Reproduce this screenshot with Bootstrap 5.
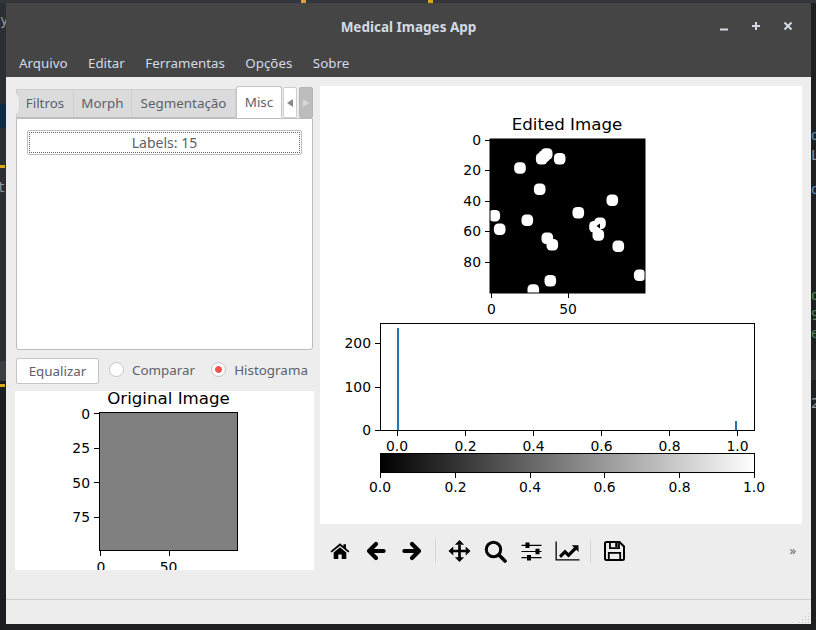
<!DOCTYPE html>
<html lang="pt-BR">
<head>
    <title>Medical Images App</title>
    <meta charset="utf-8">
    <meta name="viewport" content="width=device-width, initial-scale=1">
    <link href="https://cdn.jsdelivr.net/npm/bootstrap@5.3.0/dist/css/bootstrap.min.css" rel="stylesheet">
    <style>
        body {
            font-family: "Noto Sans", sans-serif;
            font-size: 13.4px;
            background-color: #1e1f21;
            color: #5c616c;
            height: 630px;
            overflow: hidden;
            position: relative;
        }
        /* editor that shows behind the window */
        .desk-bit {
            position: absolute;
            font-family: "DejaVu Sans Mono", monospace;
            font-size: 14px;
            line-height: 16px;
        }
        .desk-left { left: 0; top: 0; width: 6px; height: 630px; background-color: #2b2e32; }
        .desk-top { left: 0; top: 0; width: 816px; height: 3px; background-color: #33363a; }
        .desk-blue { left: 0; top: 104px; width: 6px; height: 24px; background-color: #0e2a45; }
        .desk-band-l { left: 0; top: 361px; width: 6px; height: 20px; background-color: #3c3f42; }
        .desk-dark-l { left: 0; top: 381px; width: 6px; height: 249px; background-color: #1d1e21; }
        .desk-band-r { left: 811px; top: 360px; width: 5px; height: 20px; background-color: #2d2e31; }
        .desk-dot { width: 5px; height: 3px; background-color: #d9a520; }

        .app-window {
            position: absolute;
            left: 6px;
            top: 3px;
            width: 805px;
            height: 621px;
            background-color: #ededed;
        }
        .title-row { height: 46px; padding-top: 2px; background-color: #454545; color: #d3dae3; }
        .title-text { font-weight: 700; font-size: 13.5px; }
        .win-btns { right: 14px; top: 14px; }
        .menu-row { height: 28px; background-color: #454545; padding: 0 2.75px; }
        .menu-row .nav-link { color: #d3dae3; padding: 0 10.25px; font-size: 13.33px; line-height: 28px; }

        .work-area { height: 522px; padding: 9px 9px 0 9px; gap: 6px; }
        .left-col { width: 299px; }
        .right-col { width: 482px; }

        .tab-row { height: 32px; padding: 0 1px; border: 0; flex-wrap: nowrap; }
        .tab-row .nav-link {
            height: 29px;
            margin: 3px 0 0 0;
            padding: 0;
            text-align: center;
            line-height: 27px;
            color: #5c616c;
            background-color: #dbdbdb;
            border: 1px solid #cfcfcf;
            border-left-width: 0;
            border-bottom-color: #bdbdbd;
            border-radius: 0;
        }
        .tab-row .first-tab { position: relative; width: 58px; border-left-width: 1px; }
        .tab-row .morph-tab { width: 58px; }
        .tab-row .segment-tab { width: 104px; }
        .first-tab::before {
            content: "";
            position: absolute;
            left: -1px;
            top: 4px;
            width: 3px;
            height: 20px;
            background-color: #ededed;
            border-radius: 0 3px 3px 0 / 0 10px 10px 0;
        }
        .tab-row .nav-link.active {
            width: 46px;
            height: 32px;
            margin-top: 0;
            line-height: 30px;
            background-color: #fff;
            border: 1px solid #c4c4c4;
            border-bottom-color: #fff;
            border-radius: 3px 3px 0 0;
            position: relative;
            z-index: 1;
        }
        .tab-arrow {
            width: 14px;
            height: 31px;
            margin: 1px 0 0 1px;
            border: 1px solid #cfcfcf;
            border-radius: 2px;
            background-color: #fff;
        }
        .tab-arrow-off { margin-left: 2px; background-color: #bdbdbd; border-color: #b5b5b5; }
        .tab-panel {
            height: 232px;
            margin: 0 1px;
            padding: 11px 10px;
            background-color: #fff;
            border: 1px solid #bdbdbd;
            border-radius: 0 0 3px 3px;
        }
        .btn.labels-btn {
            --bs-btn-padding-y: 0;
            height: 25px;
            line-height: 21px;
            font-size: 14px;
            color: #5c616c;
            background-color: #fff;
            border: 1px solid #bdbdbd;
            border-radius: 2px;
            outline: 1px dotted #666;
            outline-offset: -3px;
        }
        .control-row { height: 26px; margin: 8px 0 7px 0; padding-left: 1px; }
        .btn.equal-btn {
            width: 83px;
            height: 26px;
            padding: 0;
            line-height: 25px;
            font-size: 13.4px;
            color: #5c616c;
            background-color: #fff;
            border: 1px solid #c4c4c4;
            border-radius: 2px;
        }
        .radio-item { margin: 0 0 2px 0; padding: 0; min-height: 0; gap: 8px; }
        .radio-first { margin-left: 10px; }
        .radio-second { margin-left: 16px; }
        .radio-item .form-check-input {
            float: none;
            margin: 0;
            width: 15px;
            height: 15px;
            border: 1px solid #c4c4c4;
        }
        .radio-item .form-check-input:checked {
            background-image: none;
            background: radial-gradient(circle, #f0544c 0 3px, #fff 3.8px);
            border-color: #c4c4c4;
        }
        .radio-item .form-check-label { color: #5c616c; }
        .plot-panel { height: 179px; background-color: #fff; }
        .plot-panel svg, .canvas-panel svg { display: block; }
        .plot-label { font-family: "DejaVu Sans", sans-serif; font-size: 13.9px; fill: #000; }
        .plot-title { font-family: "DejaVu Sans", sans-serif; font-size: 16.67px; fill: #000; text-anchor: middle; }
        .canvas-panel { height: 438px; background-color: #fff; }
        .tool-row { height: 75px; padding: 14px 4px 0 2px; }
        .tool-btn { width: 36px; height: 26px; color: #000; }
        .tool-sep { width: 1px; height: 24px; background-color: #d6d6d6; margin: 1px 5px 0 5px; }
        .more-arrows { font-size: 13px; line-height: 24px; color: #666; margin-left: auto; margin-right: 2px; }
        .status-row { height: 25px; border-top: 1px solid #cfcfcf; }
    </style>
</head>
<body>

<div class="desk-bit desk-left"></div>
<div class="desk-bit desk-top"></div>
<div class="desk-bit desk-blue"></div>
<div class="desk-bit desk-band-l"></div>
<div class="desk-bit desk-dark-l"></div>
<div class="desk-bit desk-band-r"></div>
<div class="desk-bit desk-dot" style="left:0;top:165px"></div>
<div class="desk-bit desk-dot" style="left:0;top:384px"></div>
<div class="desk-bit desk-dot" style="left:301px;top:0"></div>
<div class="desk-bit desk-dot" style="left:428px;top:0"></div>
<div class="desk-bit text-white-50" style="left:0;top:12px">y</div>
<div class="desk-bit text-white-50" style="left:-3px;top:179px">t</div>
<div class="desk-bit" style="left:811px;top:127px;color:#5d8fc0">d</div>
<div class="desk-bit" style="left:811px;top:147px;color:#8a9099">L</div>
<div class="desk-bit" style="left:811px;top:181px;color:#5d8fc0">o</div>
<div class="desk-bit" style="left:811px;top:287px;color:#4f8a4f">o</div>
<div class="desk-bit" style="left:811px;top:307px;color:#4f8a4f">9</div>
<div class="desk-bit" style="left:811px;top:325px;color:#4f8a4f">e</div>
<div class="desk-bit" style="left:811px;top:395px;color:#999">2</div>

<div class="app-window d-flex flex-column">
    <div class="title-row position-relative d-flex justify-content-center align-items-center">
        <span class="title-text">Medical Images App</span>
        <div class="win-btns position-absolute d-flex">
            <svg width="80" height="22" viewBox="0 0 80 22">
                <path d="M3 12.5H11" stroke="#d3dae3" stroke-width="2" fill="none"/>
                <path d="M35 9H43M39 5V13" stroke="#d3dae3" stroke-width="2" fill="none"/>
                <path d="M67.5 5.5L74.5 12.5M74.5 5.5L67.5 12.5" stroke="#d3dae3" stroke-width="2" fill="none"/>
            </svg>
        </div>
    </div>
    <ul class="nav menu-row">
        <li class="nav-item"><a class="nav-link" href="#">Arquivo</a></li>
        <li class="nav-item"><a class="nav-link" href="#">Editar</a></li>
        <li class="nav-item"><a class="nav-link" href="#">Ferramentas</a></li>
        <li class="nav-item"><a class="nav-link" href="#">Opções</a></li>
        <li class="nav-item"><a class="nav-link" href="#">Sobre</a></li>
    </ul>

    <div class="work-area d-flex">
        <div class="left-col d-flex flex-column">
            <ul class="nav tab-row">
                <li class="nav-item"><a class="nav-link first-tab" href="#">Filtros</a></li>
                <li class="nav-item"><a class="nav-link morph-tab" href="#">Morph</a></li>
                <li class="nav-item"><a class="nav-link segment-tab" href="#">Segmentação</a></li>
                <li class="nav-item"><a class="nav-link active" href="#">Misc</a></li>
                <li class="nav-item tab-arrow d-flex align-items-center justify-content-center">
                    <svg width="6" height="8" viewBox="0 0 6 8"><path d="M6 0V8L0 4Z" fill="#888"/></svg>
                </li>
                <li class="nav-item tab-arrow tab-arrow-off d-flex align-items-center justify-content-center">
                    <svg width="6" height="8" viewBox="0 0 6 8"><path d="M0 0V8L6 4Z" fill="#d8d8d8"/></svg>
                </li>
            </ul>
            <div class="tab-panel">
                <button type="button" class="btn labels-btn w-100">Labels: 15</button>
            </div>
            <div class="control-row d-flex align-items-center">
                <button type="button" class="btn equal-btn">Equalizar</button>
                <div class="form-check radio-item radio-first d-flex align-items-center">
                    <input class="form-check-input" type="radio" name="view" id="radioCompare">
                    <label class="form-check-label" for="radioCompare">Comparar</label>
                </div>
                <div class="form-check radio-item radio-second d-flex align-items-center">
                    <input class="form-check-input" type="radio" name="view" id="radioHist" checked>
                    <label class="form-check-label" for="radioHist">Histograma</label>
                </div>
            </div>
            <div class="plot-panel">
                <svg width="299" height="179" viewBox="15 391 299 179">
                    <text class="plot-title" x="168.5" y="404">Original Image</text>
                    <rect x="99.5" y="412.5" width="138" height="138" fill="#808080" stroke="#000"/>
                    <path d="M94 413.5H99M94 448.5H99M94 482.5H99M94 517.5H99M100.5 551V556M169.5 551V556" stroke="#000"/>
                    <text class="plot-label" x="90" y="419" text-anchor="end">0</text>
                    <text class="plot-label" x="90" y="453" text-anchor="end">25</text>
                    <text class="plot-label" x="90" y="488" text-anchor="end">50</text>
                    <text class="plot-label" x="90" y="522" text-anchor="end">75</text>
                    <text class="plot-label" x="101" y="572" text-anchor="middle">0</text>
                    <text class="plot-label" x="168.5" y="572" text-anchor="middle">50</text>
                </svg>
            </div>
        </div>

        <div class="right-col d-flex flex-column">
            <div class="canvas-panel">
                <svg width="482" height="438" viewBox="320 86 482 438">
                    <defs>
                        <linearGradient id="grayBar"><stop offset="0" stop-color="#000"/><stop offset="1" stop-color="#fff"/></linearGradient>
                        <clipPath id="editClip"><rect x="490" y="139" width="155" height="154"/></clipPath>
                        <rect id="blob" x="-5.8" y="-5.8" width="11.6" height="11.6" rx="4.5" fill="#fff"/>
                    </defs>
                    <text class="plot-title" x="567" y="130">Edited Image</text>
                    <rect x="490" y="139" width="155" height="154" fill="#000"/>
                    <g clip-path="url(#editClip)">
                        <use href="#blob" x="546.7" y="154"/><use href="#blob" x="541.7" y="158.7"/>
                        <use href="#blob" x="544.2" y="156.3"/>
                        <use href="#blob" x="559.7" y="158.7"/>
                        <use href="#blob" x="520" y="168"/>
                        <use href="#blob" x="539.7" y="189.3"/>
                        <use href="#blob" x="612.3" y="200.3"/>
                        <use href="#blob" x="494.3" y="215.7"/>
                        <use href="#blob" x="578.3" y="212.7"/>
                        <use href="#blob" x="527.3" y="220.3"/>
                        <use href="#blob" x="499.7" y="229.3"/>
                        <use href="#blob" x="600" y="223.3"/><use href="#blob" x="595" y="226.7"/><use href="#blob" x="598.3" y="235"/>
                        <path d="M596.5 226L600 223.5L600 228.5Z" fill="#000"/>
                        <use href="#blob" x="547.3" y="238.3"/><use href="#blob" x="552.3" y="244.7"/>
                        <use href="#blob" x="618.3" y="246.3"/>
                        <use href="#blob" x="639.7" y="275.3"/>
                        <use href="#blob" x="550.3" y="280.7"/>
                        <use href="#blob" x="533.3" y="290"/>
                    </g>
                    <rect x="490" y="139" width="155" height="154" fill="none" stroke="#000"/>
                    <path d="M485 140.5H490M485 170.5H490M485 201.5H490M485 231.5H490M485 262.5H490M491.5 293V298M568.5 293V298" stroke="#000"/>
                    <text class="plot-label" x="481" y="145" text-anchor="end">0</text>
                    <text class="plot-label" x="481" y="175" text-anchor="end">20</text>
                    <text class="plot-label" x="481" y="206" text-anchor="end">40</text>
                    <text class="plot-label" x="481" y="236" text-anchor="end">60</text>
                    <text class="plot-label" x="481" y="267" text-anchor="end">80</text>
                    <text class="plot-label" x="491.5" y="314" text-anchor="middle">0</text>
                    <text class="plot-label" x="568" y="314" text-anchor="middle">50</text>

                    <rect x="380.5" y="323.5" width="374" height="107" fill="none" stroke="#000"/>
                    <rect x="397" y="328" width="2" height="102" fill="#1f77b4"/>
                    <rect x="735" y="421" width="2" height="9" fill="#1f77b4"/>
                    <path d="M375 343.5H380M375 387.5H380M375 430.5H380M397.5 431V436M465.5 431V436M533.5 431V436M601.5 431V436M669.5 431V436M737.5 431V436" stroke="#000"/>
                    <text class="plot-label" x="371" y="348" text-anchor="end">200</text>
                    <text class="plot-label" x="371" y="392" text-anchor="end">100</text>
                    <text class="plot-label" x="371" y="435" text-anchor="end">0</text>
                    <text class="plot-label" x="397" y="451" text-anchor="middle">0.0</text>
                    <text class="plot-label" x="465.5" y="451" text-anchor="middle">0.2</text>
                    <text class="plot-label" x="533.5" y="451" text-anchor="middle">0.4</text>
                    <text class="plot-label" x="601.5" y="451" text-anchor="middle">0.6</text>
                    <text class="plot-label" x="669.5" y="451" text-anchor="middle">0.8</text>
                    <text class="plot-label" x="737.5" y="451" text-anchor="middle">1.0</text>

                    <rect x="380.5" y="453.5" width="374" height="19" fill="url(#grayBar)" stroke="#000"/>
                    <path d="M380.5 473V478M455.5 473V478M530.5 473V478M604.5 473V478M679.5 473V478M754.5 473V478" stroke="#000"/>
                    <text class="plot-label" x="380" y="492" text-anchor="middle">0.0</text>
                    <text class="plot-label" x="455.5" y="492" text-anchor="middle">0.2</text>
                    <text class="plot-label" x="530" y="492" text-anchor="middle">0.4</text>
                    <text class="plot-label" x="604.5" y="492" text-anchor="middle">0.6</text>
                    <text class="plot-label" x="679.5" y="492" text-anchor="middle">0.8</text>
                    <text class="plot-label" x="754" y="492" text-anchor="middle">1.0</text>
                </svg>
            </div>
            <div class="tool-row d-flex align-items-start">
                <div class="tool-btn d-flex align-items-center justify-content-center">
                    <svg width="20" height="18" viewBox="0 0 22 20" fill="currentColor"><path d="M0.5 10.2L11 1.5L14.8 4.6V2.4H17.6V6.9L21.5 10.2L20.2 11.7L11 4.1L1.8 11.7Z"/><path d="M4 11.6L11 5.9L18 11.6V19H12.9V14H9.1V19H4Z"/></svg>
                </div>
                <div class="tool-btn d-flex align-items-center justify-content-center">
                    <svg width="20" height="20" viewBox="0 0 20 20" fill="none" stroke="currentColor" stroke-width="4.2" stroke-linejoin="round" stroke-linecap="round"><path d="M3 10H17.6M10 3L3 10L10 17"/></svg>
                </div>
                <div class="tool-btn d-flex align-items-center justify-content-center">
                    <svg width="20" height="20" viewBox="0 0 20 20" fill="none" stroke="currentColor" stroke-width="4.2" stroke-linejoin="round" stroke-linecap="round"><path d="M17 10H2.4M10 3L17 10L10 17"/></svg>
                </div>
                <div class="tool-sep"></div>
                <div class="tool-btn d-flex align-items-center justify-content-center">
                    <svg width="23" height="24" viewBox="0 0 24 24" fill="currentColor"><path d="M10.6 5.5H13.4V10.6H18.5V7.2L23.5 12L18.5 16.8V13.4H13.4V18.5H16.8L12 23.5L7.2 18.5H10.6V13.4H5.5V16.8L0.5 12L5.5 7.2V10.6H10.6Z"/><path d="M12 0.5L16.8 5.5H7.2Z"/></svg>
                </div>
                <div class="tool-btn d-flex align-items-center justify-content-center">
                    <svg width="23" height="23" viewBox="0 0 23 23" fill="none" stroke="currentColor"><circle cx="9.5" cy="9.5" r="7.2" stroke-width="3"/><path d="M15 15L21 21" stroke-width="3.6" stroke-linecap="round"/></svg>
                </div>
                <div class="tool-btn d-flex align-items-center justify-content-center">
                    <svg width="21" height="19" viewBox="0 0 21 19" fill="currentColor"><path d="M0.5 2.7H20.5V3.9H0.5ZM0.5 8.9H20.5V10.1H0.5ZM0.5 15.1H20.5V16.3H0.5Z"/><path d="M4.5 0.5H8.5V6H4.5ZM14.5 6.7H18.5V12.2H14.5ZM6 13H10V18.5H6Z"/></svg>
                </div>
                <div class="tool-btn d-flex align-items-center justify-content-center">
                    <svg width="25" height="20" viewBox="0 0 25 20" fill="currentColor"><path d="M0.5 0.5H1.8V18.2H24.5V19.5H0.5Z"/><path d="M4 14.5L10 8.5L13.5 12L19 6.5L16.8 4.3H23.5V11L21.3 8.8L13.5 16.5L10 13L6 17Z"/></svg>
                </div>
                <div class="tool-sep"></div>
                <div class="tool-btn d-flex align-items-center justify-content-center">
                    <svg width="21" height="20" viewBox="0 0 21 20" fill="none" stroke="currentColor"><path d="M2.5 1H15.5L20 5.5V17.5C20 18.3 19.3 19 18.5 19H2.5C1.7 19 1 18.3 1 17.5V2.5C1 1.7 1.7 1 2.5 1Z" stroke-width="2"/><path d="M6 1V7.2H15V1" stroke-width="1.8"/><path d="M4.8 19V11.8H16.2V19" stroke-width="1.8"/><rect x="11.2" y="2" width="2.4" height="4" fill="currentColor" stroke="none"/></svg>
                </div>
                <span class="more-arrows">&raquo;</span>
            </div>
        </div>
    </div>
    <div class="status-row d-flex justify-content-end align-items-end">
        <svg width="12" height="13" viewBox="0 0 12 13" fill="#c4c4c4"><rect x="9" y="2" width="1" height="1"/><rect x="9" y="5" width="1" height="1"/><rect x="6" y="5" width="1" height="1"/><rect x="9" y="8" width="1" height="1"/><rect x="6" y="8" width="1" height="1"/><rect x="3" y="8" width="1" height="1"/><rect x="9" y="11" width="1" height="1"/><rect x="6" y="11" width="1" height="1"/><rect x="3" y="11" width="1" height="1"/><rect x="0" y="11" width="1" height="1"/></svg>
    </div>
</div>

<script src="https://cdn.jsdelivr.net/npm/bootstrap@5.3.0/dist/js/bootstrap.bundle.min.js"></script>
</body>
</html>
